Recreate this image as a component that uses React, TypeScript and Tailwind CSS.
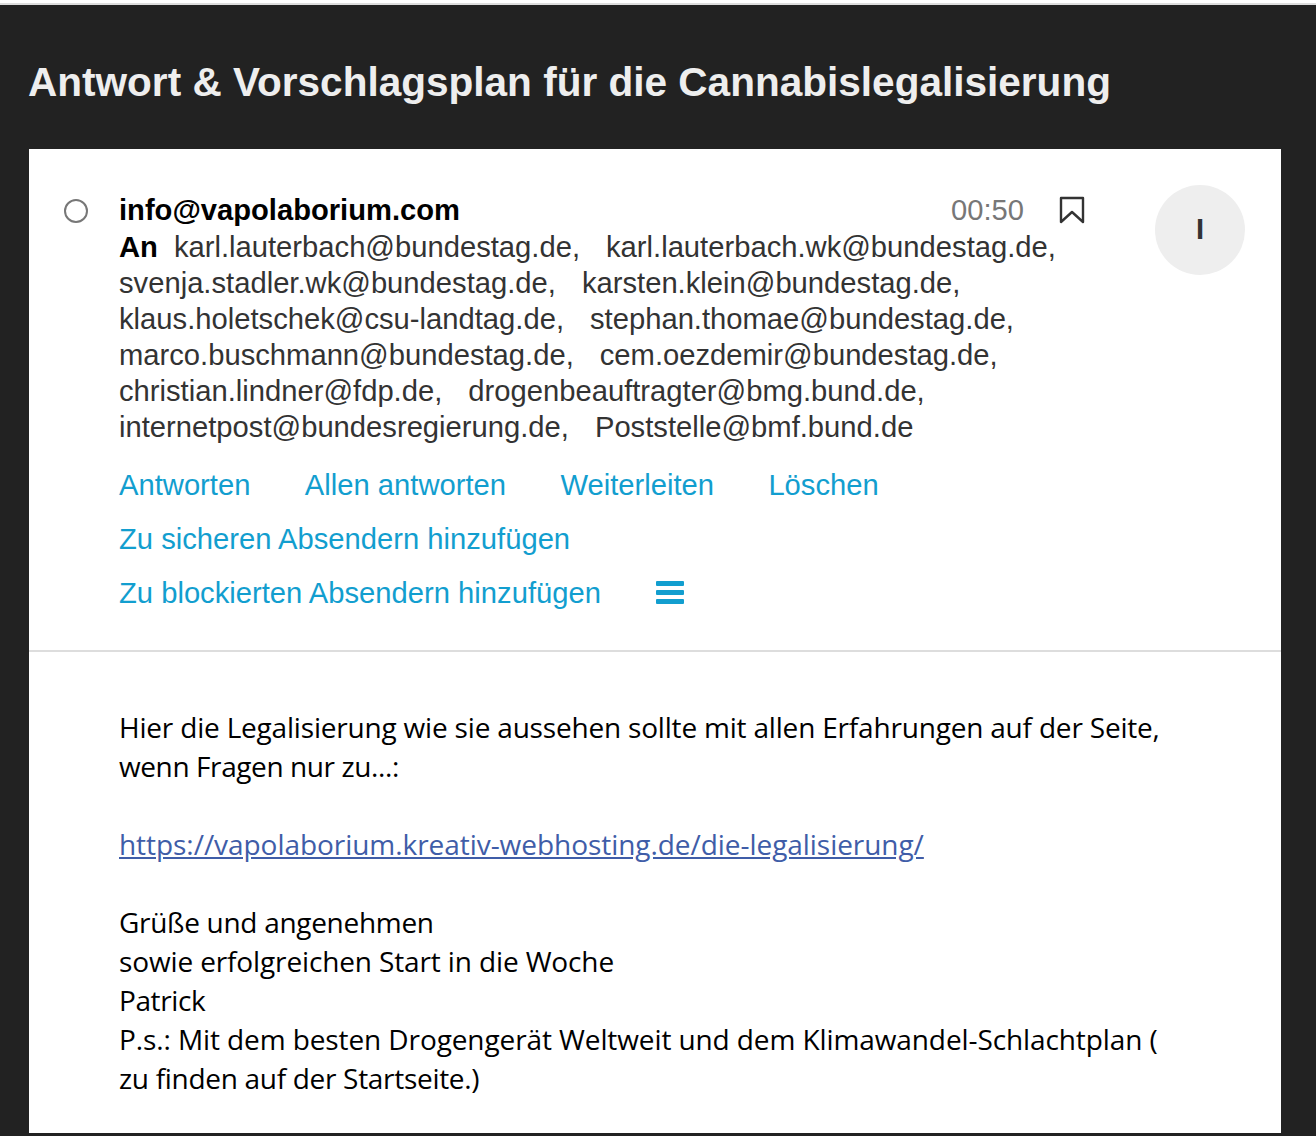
import React from "react";

const sans = "font-['Liberation_Sans',Arial,sans-serif]";

function Recipient({ children }: { children: React.ReactNode }) {
  return <span className="mr-[26px] inline-block">{children}</span>;
}

export default function App() {
  return (
    <div className={`h-[1136px] w-[1316px] overflow-hidden bg-[#222222] ${sans}`}>
      <div className="h-[3px] bg-white" />
      <div className="h-[2px] bg-[#dddddd]" />
      <div className="px-[29px] pb-[3px]">
        <h1 className="ml-[-1px] flex h-[144px] items-center pt-[10px] text-[40.55px] font-bold leading-none text-[#eeeeee]">
          Antwort &amp; Vorschlagsplan für die Cannabislegalisierung
        </h1>
        <div className="h-[984px] w-[1252px] bg-white">
          <div className="flex h-[503px] border-b-2 border-[#dddddd] pl-[35px] pr-[36px] pt-[36px]">
            <div className="w-[55px] shrink-0 pt-[14px]">
              <div className="h-[24px] w-[24px] rounded-full border-2 border-[#777777]" />
            </div>
            <div className="min-w-0 flex-1">
              <div className="flex h-[44px] w-[967px] items-center justify-between pt-[7px]">
                <span className="text-[29.15px] font-bold leading-none text-black">info@vapolaborium.com</span>
                <span className="flex items-center">
                  <span className="text-[29.15px] leading-none text-[#777777]">00:50</span>
                  <svg className="ml-[35px] mr-[1px] mt-[-2px] h-[28px] w-[26px]" viewBox="0 0 26 28" fill="none" stroke="#333333" strokeWidth="2.4" strokeLinejoin="round">
                    <path d="M2 2H24V26L13 16L2 26Z" />
                  </svg>
                </span>
              </div>
              <div className="w-[967px] text-[29.2px] leading-[36px] text-[#333333]">
                <span className="mr-[16px] font-bold text-black">An</span>
                <Recipient>karl.lauterbach@bundestag.de,</Recipient>karl.lauterbach.wk@bundestag.de,
                <br />
                <Recipient>svenja.stadler.wk@bundestag.de,</Recipient>karsten.klein@bundestag.de,
                <br />
                <Recipient>klaus.holetschek@csu-landtag.de,</Recipient>stephan.thomae@bundestag.de,
                <br />
                <Recipient>marco.buschmann@bundestag.de,</Recipient>cem.oezdemir@bundestag.de,
                <br />
                <Recipient>christian.lindner@fdp.de,</Recipient>drogenbeauftragter@bmg.bund.de,
                <br />
                <Recipient>internetpost@bundesregierung.de,</Recipient>Poststelle@bmf.bund.de
              </div>
              <div className="mt-[13px] text-[29.2px] leading-[54px] text-[#129ecf]">
                <div className="flex gap-[54.4px]">
                  <span>Antworten</span>
                  <span>Allen antworten</span>
                  <span>Weiterleiten</span>
                  <span>Löschen</span>
                </div>
                <div>Zu sicheren Absendern hinzufügen</div>
                <div className="flex items-center gap-[55px]">
                  <span>Zu blockierten Absendern hinzufügen</span>
                  <span className="mb-[2px] flex flex-col gap-[4px]">
                    <span className="h-[5px] w-[28px] rounded-[1px] bg-[#129ecf]" />
                    <span className="h-[5px] w-[28px] rounded-[1px] bg-[#129ecf]" />
                    <span className="h-[5px] w-[28px] rounded-[1px] bg-[#129ecf]" />
                  </span>
                </div>
              </div>
            </div>
            <div className="ml-[-1px] flex h-[90px] w-[90px] shrink-0 items-center justify-center rounded-full bg-[#eeeeee] text-[29.15px] font-bold text-[#333333]">
              I
            </div>
          </div>
          <div className="px-[90px] pt-[56px] font-['Open_Sans',sans-serif] text-[28px] leading-[39px] text-black">
            <p className="tracking-[-0.19px]">Hier die Legalisierung wie sie aussehen sollte mit allen Erfahrungen auf der Seite,</p>
            <p className="tracking-[-0.4px]">wenn Fragen nur zu...:</p>
            <p className="mt-[39px]">
              <a className="tracking-[-0.05px] text-[#3f5da8] underline">https://vapolaborium.kreativ-webhosting.de/die-legalisierung/</a>
            </p>
            <p className="mt-[39px] tracking-[-0.3px]">Grüße und angenehmen</p>
            <p className="tracking-[-0.13px]">sowie erfolgreichen Start in die Woche</p>
            <p className="tracking-[-0.4px]">Patrick</p>
            <p className="tracking-[-0.1px]">P.s.: Mit dem besten Drogengerät Weltweit und dem Klimawandel-Schlachtplan (</p>
            <p className="tracking-[-0.3px]">zu finden auf der Startseite.)</p>
          </div>
        </div>
      </div>
    </div>
  );
}
